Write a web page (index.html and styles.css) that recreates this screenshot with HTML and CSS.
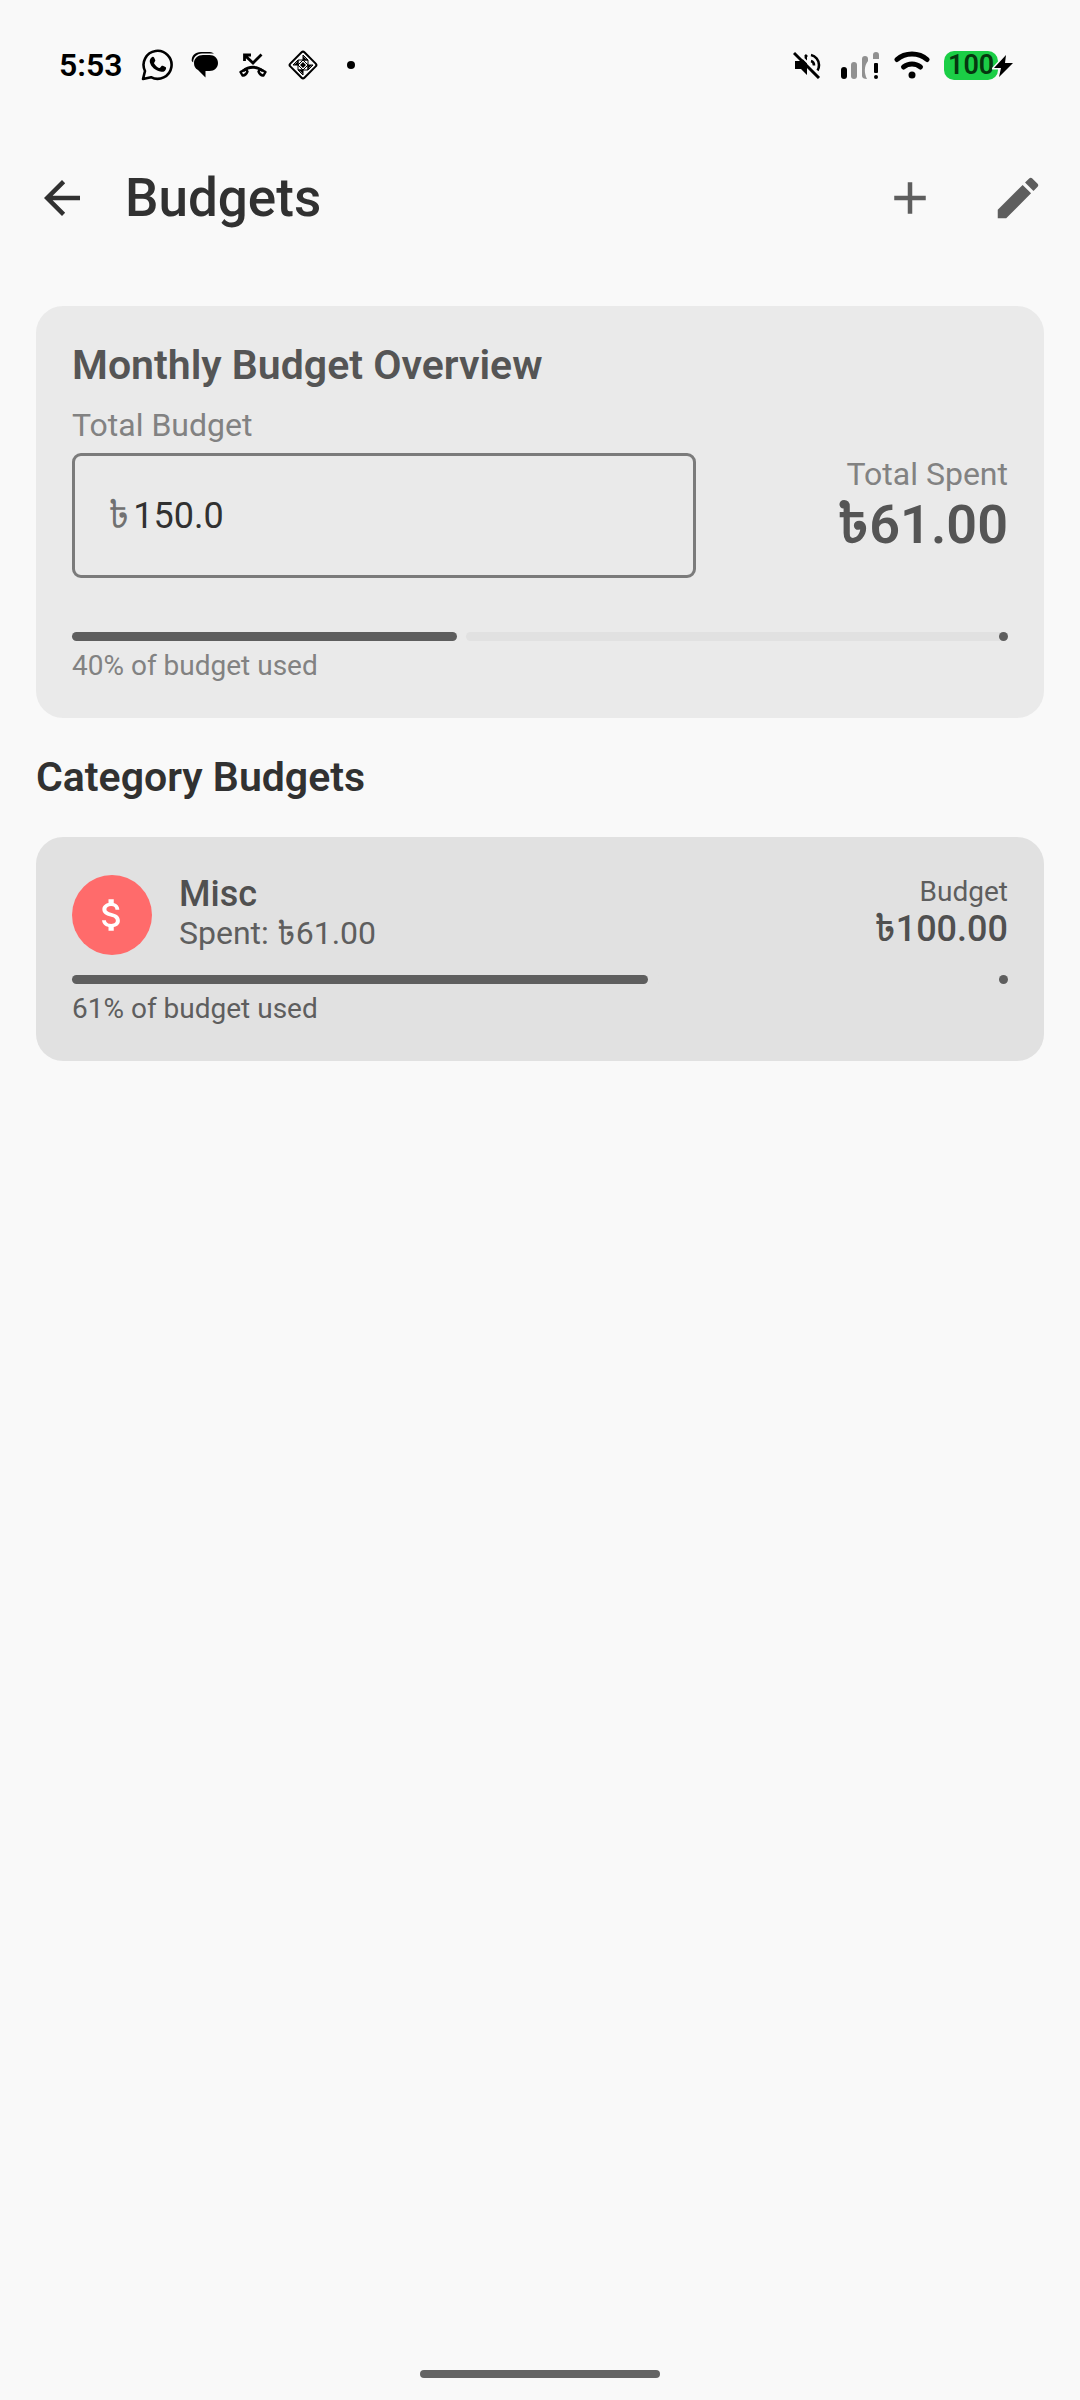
FILE: index.html
```html
<!DOCTYPE html>
<html lang="en">
<head>
<meta charset="utf-8">
<meta name="viewport" content="width=device-width, initial-scale=1">
<title>Budgets</title>
<link rel="stylesheet" href="styles.css">
</head>
<body>
<div class="screen">
  <div class="status-bar">
    <div class="status-left">
      <span class="clock">5:53</span>
      <svg class="status-icon" width="32" height="32" viewBox="0 0 32 32" aria-hidden="true">
        <path d="M2 30l2-8A14 14 0 1 1 10 28.200z" fill="none" stroke="#000" stroke-width="2.600" stroke-linejoin="round"/>
        <path d="M10.500 8.500c1-1 2.200-.8 2.700.3l1 2.300c.3.700 0 1.300-.9 2.300-.4.500-.3.900 0 1.400 1.200 2 2.700 3.300 4.700 4.100.5.200.9.200 1.300-.3l1.200-1.500c.4-.5.900-.5 1.400-.3l2.500 1.200c.6.300.8.600.7 1.200-.2 2.400-2.400 3.900-4.700 3.600-6-.9-10.400-5-11.500-9.300-.5-2 .2-3.800 1.600-5z"/>
      </svg>
      <svg class="status-icon" width="28" height="28" viewBox="0 0 28 28" aria-hidden="true">
        <path d="M12 4h6.500C23.500 4 27 7.500 27 12s-3.500 8-8.500 8h-4v6.500L7 19C4 17.500 3 15 3 12c0-4.500 4-8 9-8z"/>
        <path d="M2.200 11.500C2 6.500 5.500 3 11 2.600l12-.1C21 1.200 19.500 1 17 1h-7C4 1 .5 4.500.7 10z"/>
      </svg>
      <svg class="status-icon" width="32" height="28" viewBox="0 0 32 28" aria-hidden="true">
        <g fill="none" stroke="#000" stroke-width="2.800">
          <path d="M7.500 10V4H14M8 4.500l8 7.500L24.500 3.500"/>
          <path d="M6 20c6-5 14-5 20 0"/>
          <path d="M9 18l-5.500 3 2 3.500c2 .3 4-1.500 5-4zM23 18l5.500 3-2 3.500c-2 .3-4-1.500-5-4z" stroke-linejoin="round" stroke-width="2.400"/>
        </g>
      </svg>
      <svg class="status-icon" width="32" height="32" viewBox="0 0 32 32" aria-hidden="true">
        <rect x="6" y="6" width="20" height="20" rx="2" transform="rotate(45 16 16)" fill="none" stroke="#000" stroke-width="2"/>
        <path d="M16 6l5 5h-5zM16 26l-5-5h5zM6 16l5-5v5zM26 16l-5 5v-5zM11 11h5l-5 5zM21 11v5l-5-5zM11 21v-5l5 5zM21 21h-5l5-5z" fill="none" stroke="#000" stroke-width="1"/>
        <path d="M16 7l4 4h-4zM16 25l-4-4h4zM7 16l4-4v4zM25 16l-4 4v-4zM16 13l3 3-3 3-3-3z"/>
      </svg>
      <span class="more-dot"></span>
    </div>
    <div class="status-right">
      <svg width="28" height="28" viewBox="0 0 28 28" aria-hidden="true">
        <path d="M2 10h6l6-6v20l-6-6H2z"/>
        <path d="M18 4c4.500 1 8 5 8 10 0 2-.5 4-1.500 5.500M18 10c2 .5 3 2.300 3 4.500M12 4l2 2" fill="none" stroke="#000" stroke-width="2.600"/>
        <path d="M3 0l25 25" stroke="#f9f9f9" stroke-width="2"/>
        <path d="M1 2l25 25" stroke="#000" stroke-width="3"/>
      </svg>
      <svg class="signal" width="40" height="28" viewBox="0 0 40 28" aria-hidden="true">
        <rect x="1" y="16" width="6" height="12" rx="3"/>
        <rect x="11" y="11" width="6" height="17" rx="3" fill="#919191"/>
        <path d="M22 8a3 3 0 0 1 6 0v2c-4 5-4 12-1 18-3 0-5-1-5-3zM33 8V4a3 3 0 0 1 6 0v4z" fill="#919191"/>
        <rect x="34" y="12" width="4" height="10" rx="1"/>
        <circle cx="36" cy="26" r="2"/>
      </svg>
      <svg class="wifi" width="36" height="28" viewBox="0 0 36 28" aria-hidden="true">
        <g fill="none" stroke="#000" stroke-width="5" stroke-linecap="round">
          <path d="M3 8.500C11 1 25 1 33 8.500"/>
          <path d="M9.500 16c5-4 12-4 17 0"/>
        </g>
        <circle cx="18" cy="24" r="3.500"/>
      </svg>
      <div class="battery">
        <span class="battery-level">100</span>
        <svg class="bolt" width="22" height="24" viewBox="0 0 22 24" aria-hidden="true">
          <path d="M14 1L2 14h7L7 23 21 9h-8z" stroke="#f9f9f9" stroke-width="3"/>
          <path d="M14 1L2 14h7L7 23 21 9h-8z"/>
        </svg>
      </div>
    </div>
  </div>

  <header class="app-bar">
    <button class="icon-button" type="button" aria-label="Back">
      <svg width="54" height="54" viewBox="0 0 24 24" fill="#313131"><path d="M20 11H7.830l5.590-5.590L12 4l-8 8 8 8 1.410-1.410L7.830 13H20v-2z"/></svg>
    </button>
    <h1 class="app-title">Budgets</h1>
    <button class="icon-button" type="button" aria-label="Add budget">
      <svg width="54" height="54" viewBox="0 0 24 24" fill="#5e5e5e"><path d="M19 13h-6v6h-2v-6H5v-2h6V5h2v6h6v2z"/></svg>
    </button>
    <button class="icon-button" type="button" aria-label="Edit budgets">
      <svg width="54" height="54" viewBox="0 0 24 24" fill="#5e5e5e"><path d="M3 17.250V21h3.750L17.810 9.940l-3.750-3.750L3 17.250zM20.710 7.040c.39-.39.39-1.020 0-1.410l-2.340-2.340c-.39-.39-1.020-.39-1.410 0l-1.830 1.830 3.750 3.750 1.830-1.830z"/></svg>
    </button>
  </header>

  <main class="content">
    <section class="card overview">
      <h2 class="heading">Monthly Budget Overview</h2>
      <div class="overview-row">
        <div class="field">
          <label class="label" for="total-budget">Total Budget</label>
          <div class="text-box">
            <span class="prefix">৳</span>
            <input class="amount-input" id="total-budget" type="text" inputmode="decimal" value="150.0">
          </div>
        </div>
        <div class="spent">
          <div class="label">Total Spent</div>
          <div class="spent-total">৳61.00</div>
        </div>
      </div>
      <div class="progress" role="progressbar" aria-label="Total budget used" aria-valuenow="40">
        <span class="progress-fill" style="width: 41.1%"></span>
        <span class="progress-track"></span>
      </div>
      <p class="caption">40% of budget used</p>
    </section>

    <h2 class="heading section-heading">Category Budgets</h2>

    <section class="card category">
      <div class="category-row">
        <span class="category-icon">
          <svg width="42" height="42" viewBox="0 0 24 24" fill="#fff" aria-hidden="true"><path d="M11.800 10.900c-2.270-.59-3-1.200-3-2.150 0-1.090 1.010-1.850 2.700-1.850 1.780 0 2.440.85 2.500 2.100h2.210c-.07-1.720-1.120-3.300-3.210-3.810V3h-3v2.160c-1.940.42-3.500 1.680-3.500 3.610 0 2.310 1.910 3.460 4.700 4.130 2.500.6 3 1.480 3 2.410 0 .69-.49 1.790-2.700 1.790-2.060 0-2.870-.92-2.980-2.100h-2.200c.12 2.190 1.760 3.420 3.680 3.830V21h3v-2.150c1.950-.37 3.500-1.500 3.500-3.550 0-2.840-2.430-3.810-4.700-4.400z"/></svg>
        </span>
        <div class="category-info">
          <h3 class="category-name">Misc</h3>
          <div class="category-spent">Spent: ৳61.00</div>
        </div>
        <div class="category-budget">
          <div class="caption">Budget</div>
          <div class="category-amount">৳100.00</div>
        </div>
      </div>
      <div class="progress" role="progressbar" aria-label="Misc budget used" aria-valuenow="61">
        <span class="progress-fill" style="width: 61.5%"></span>
        <span class="progress-track"></span>
      </div>
      <p class="caption">61% of budget used</p>
    </section>
  </main>

  <div class="gesture-area"><span class="gesture-handle"></span></div>
</div>
</body>
</html>
```
FILE: styles.css
```css
* {
  box-sizing: border-box;
}

body {
  margin: 0;
  background: #f9f9f9;
  color: #313131;
  font-family: Roboto, "Noto Sans Bengali", "Noto Sans", sans-serif;
}

h1, h2, h3, p {
  margin: 0;
}

svg {
  display: block;
  flex: none;
}

.screen {
  display: flex;
  flex-direction: column;
  min-height: 100vh;
}

/* Status bar */
.status-bar {
  display: flex;
  justify-content: space-between;
  align-items: center;
  height: 126px;
  padding: 4px 66px 0 59px;
  color: #000;
}

.status-left,
.status-right {
  display: flex;
  align-items: center;
}

.status-left {
  gap: 18px;
}

.status-right {
  gap: 14px;
}

.clock {
  font-size: 32px;
  font-weight: 600;
  line-height: 36px;
}

.signal {
  margin-left: 5px;
}

.more-dot {
  width: 8px;
  height: 8px;
  margin-left: 10px;
  border-radius: 50%;
  background: #000;
}

.battery {
  position: relative;
  margin-right: 16px;
}

.battery-level {
  display: block;
  width: 54px;
  padding-left: 4px;
  border-radius: 10px;
  background: #1bce46;
  color: #06370f;
  font-size: 27px;
  font-weight: 600;
  line-height: 29px;
}

.bolt {
  position: absolute;
  top: 3px;
  right: -16px;
}

/* App bar */
.app-bar {
  display: flex;
  align-items: center;
  height: 144px;
  padding: 0 8px;
}

.icon-button {
  display: flex;
  justify-content: center;
  align-items: center;
  width: 108px;
  height: 108px;
  padding: 0;
  border: 0;
  border-radius: 50%;
  background: none;
}

.app-title {
  flex: 1;
  padding-left: 9px;
  font-size: 53px;
  font-weight: 500;
  line-height: 63px;
}

/* Content */
.content {
  flex: 1;
  padding: 36px;
}

.card {
  padding: 36px;
  border-radius: 27px;
}

.overview {
  background: #eaeaea;
  color: #555;
}

.category {
  background: #e1e1e1;
  color: #505050;
}

.heading {
  font-size: 41px;
  font-weight: 600;
  line-height: 47px;
}

.section-heading {
  margin: 36px 0;
}

.overview-row {
  display: grid;
  grid-template-columns: 2fr 1fr;
  align-items: center;
  margin: 18px 0 54px;
}

.label {
  display: block;
  color: #828282;
  font-size: 32px;
  line-height: 37px;
}

.text-box {
  display: flex;
  align-items: center;
  height: 125px;
  margin-top: 9px;
  padding: 0 33px;
  border: 3px solid #7b7b7b;
  border-radius: 9px;
  font-size: 36px;
  line-height: 42px;
}

.prefix {
  color: #717171;
}

.amount-input {
  flex: 1;
  min-width: 0;
  padding: 0 0 0 4px;
  border: 0;
  outline: 0;
  background: none;
  color: #313131;
  font: inherit;
}

.spent {
  padding-top: 27px;
  text-align: right;
}

.spent-total {
  font-size: 54px;
  font-weight: 600;
  line-height: 63px;
}

/* Progress */
.progress {
  display: flex;
  gap: 9px;
  height: 9px;
}

.progress-fill {
  border-radius: 5px;
  background: #5e5e5e;
}

.progress-track {
  display: flex;
  flex: 1;
  justify-content: flex-end;
  border-radius: 5px;
  background: #e1e1e1;
}

.progress-track::after {
  width: 9px;
  height: 9px;
  border-radius: 50%;
  background: #5e5e5e;
  content: "";
}

.caption {
  font-size: 28px;
  line-height: 32px;
}

.progress + .caption {
  margin-top: 9px;
}

.overview .caption {
  color: #828282;
}

.category .caption {
  color: #5e5e5e;
}

/* Category card */
.category-row {
  display: flex;
  align-items: center;
  height: 84px;
  margin-bottom: 18px;
}

.category-icon {
  display: flex;
  justify-content: center;
  align-items: center;
  width: 80px;
  height: 80px;
  border-radius: 50%;
  background: #ff6b6b;
}

.category-info {
  flex: 1;
  align-self: flex-start;
  padding-left: 27px;
}

.category-name {
  font-size: 36px;
  font-weight: 500;
  line-height: 42px;
}

.category-spent {
  color: #5e5e5e;
  font-size: 32px;
  line-height: 37px;
}

.category-budget {
  align-self: flex-start;
  padding-top: 3px;
  text-align: right;
}

.category-amount {
  font-size: 36px;
  font-weight: 500;
  line-height: 42px;
}

/* Gesture navigation */
.gesture-area {
  display: flex;
  justify-content: center;
  padding-bottom: 22px;
}

.gesture-handle {
  width: 240px;
  height: 8px;
  border-radius: 4px;
  background: #646464;
}
```
